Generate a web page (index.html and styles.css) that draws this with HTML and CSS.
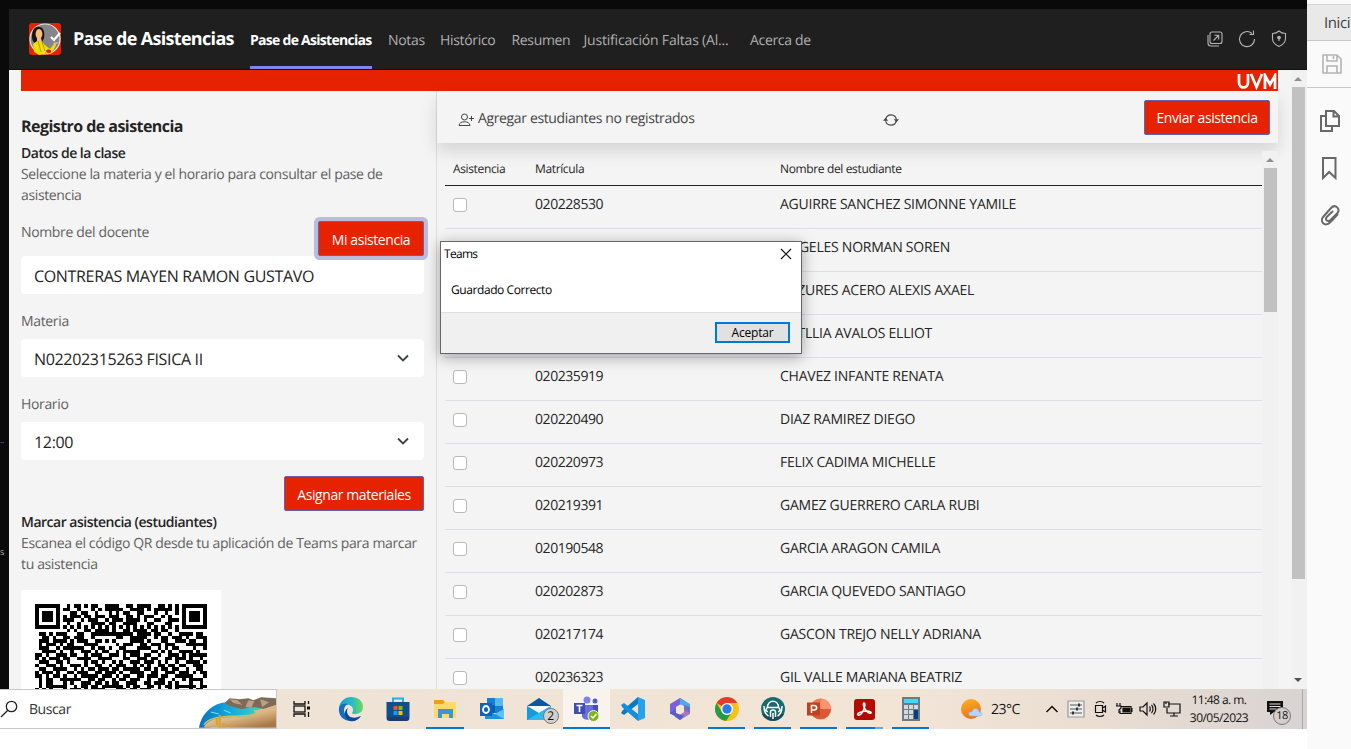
FILE: index.html
```html
<!DOCTYPE html>
<html lang="es">
<head>
<meta charset="utf-8">
<title>Pase de Asistencias</title>
<link rel="stylesheet" href="styles.css">
</head>
<body>
<div class="desktop">
  <div class="screen">
    <div class="edge"><span class="edge-dots">..</span><span class="edge-s">s</span></div>
    <div class="window">
      <header class="topbar">
        <svg class="logo" viewBox="0 0 32 32"><rect width="32" height="32" rx="3" fill="#e62200"/><circle cx="16" cy="16" r="15" fill="#85868a" stroke="#e8e4e0" stroke-width="1.2"/><path d="M3 14C3 7 6 3 10 4c5 0 6 6 5 11l-2 4-7 1c-2-1-3-3-3-6z" fill="#151313"/><ellipse cx="10" cy="11" rx="3.4" ry="5" fill="#f6bd7c"/><path d="M8 15h4l1 4h-5z" fill="#f6bd7c"/><path d="M4 21l4-3 5 1 4 4 4 3 4-5 2 1-4 8-5 1-2-2v2l-6 1-5-3z" fill="#f0df00"/><path d="M9 18l3 11M13 19l3 9" stroke="#b59b00" stroke-width="1"/><path d="M24 20l6-1-4 3z" fill="#f6bd7c"/><path d="M17 28c0-2 5-2 5 0 0 3-4 3-5 0z" fill="#dc2213"/><path d="M22 14l3 3 6-7" fill="none" stroke="#fff" stroke-width="2.2"/></svg>
        <h1 class="app-name">Pase de Asistencias</h1>
        <nav class="tabs">
          <a class="tab tab-active">Pase de Asistencias</a><a class="tab t-notas">Notas</a><a class="tab t-hist">Histórico</a><a class="tab t-res">Resumen</a><a class="tab t-just">Justificación Faltas (Al...</a><a class="tab t-acerca">Acerca de</a>
        </nav>
        <div class="top-actions">
          <svg width="16" height="16" viewBox="0 0 16 16"><rect x="3" y="1" width="12" height="11.5" rx="2"/><path d="M1 4v8a3 3 0 0 0 3 3h8M6.500 9.500l5-5M7.500 4.300h4.200v4.200"/></svg>
          <svg width="18" height="18" viewBox="0 0 18 18"><path d="M16.500 9A7.500 7.500 0 1 1 14 3.500M11.500 4.500h4v-4"/></svg>
          <svg width="16" height="18" viewBox="0 0 16 18"><path d="M8 1c2 1.800 4 2.400 6.500 2.500v5c0 4-3 6.500-6.500 8-3.500-1.500-6.500-4-6.500-8v-5C4 3.400 6 2.800 8 1z"/><circle cx="8" cy="7.500" r="1.300" fill="#b5b5b5"/><path d="M8 8v3"/></svg>
        </div>
      </header>
      <div class="content">
        <main class="page">
          <div class="banner"><svg width="41" height="17" viewBox="0 0 41 17"><path d="M3 1v8.500c0 6.500 9 6.500 9 0V1M15 1l5.500 13L26 1M29 16V2.500l5 9 5-9V16" fill="none" stroke="#fff" stroke-width="2.700"/></svg></div>
          <div class="columns">
            <section class="form">
              <h2 class="title">Registro de asistencia</h2>
              <h3 class="subtitle">Datos de la clase</h3>
              <p class="hint">Seleccione la materia y el horario para consultar el pase de<br>asistencia</p>
              <div class="name-row"><label class="label">Nombre del docente</label><button class="btn btn-focus">Mi asistencia</button></div>
              <div class="field">CONTRERAS MAYEN RAMON GUSTAVO</div>
              <label class="label label-gap">Materia</label>
              <div class="field">N02202315263 FISICA II<svg class="chev" viewBox="0 0 12 8"><path d="M1 1.500l5 5 5-5"/></svg></div>
              <label class="label label-gap">Horario</label>
              <div class="field">12:00<svg class="chev" viewBox="0 0 12 8"><path d="M1 1.500l5 5 5-5"/></svg></div>
              <button class="btn btn-assign">Asignar materiales</button>
              <h3 class="subtitle">Marcar asistencia (estudiantes)</h3>
              <p class="hint">Escanea el código QR desde tu aplicación de Teams para marcar<br>tu asistencia</p>
              <div class="qr"><svg width="172" height="172" viewBox="0 0 49 49" shape-rendering="crispEdges"><path id="qr-path"/></svg></div>
            </section>
            <section class="list">
              <div class="toolbar">
                <svg class="add-icon" viewBox="0 0 17 14"><circle cx="6.500" cy="4" r="3"/><path d="M1 12.500c0-5 11-5 11 0zM11 5.500h5M13.500 3v5"/></svg>
                <span class="add-text">Agregar estudiantes no registrados</span>
                <svg class="sync-icon" viewBox="0 0 16 14"><path d="M2.800 6A5.400 5.400 0 0 1 13.400 6.500M13.200 8A5.400 5.400 0 0 1 2.600 7.500"/><path d="M10.800 6.200H16l-2.600 3zM0 7.800h5.200l-2.600-3z" fill="#444" stroke="none"/></svg>
                <button class="btn btn-send">Enviar asistencia</button>
              </div>
              <div class="table-wrap">
                <div class="table" id="table">
                  <div class="thead"><span>Asistencia</span><span>Matrícula</span><span>Nombre del estudiante</span></div>
                </div>
                <div class="scroll scroll-in"><i class="up"></i><b class="thumb thumb-in"></b></div>
              </div>
            </section>
          </div>
        </main>
        <div class="scroll scroll-out"><i class="up"></i><b class="thumb thumb-out"></b><i class="down"></i></div>
      </div>
    </div>
  </div>
  <footer class="taskbar">
    <div class="search">
      <svg class="lens" width="18" height="18" viewBox="0 0 18 18"><circle cx="11.500" cy="6.500" r="5.200"/><path d="M7.800 10.200L1 17"/></svg><span>Buscar</span>
      <svg class="beach" viewBox="0 0 78 31"><defs><linearGradient id="sea"><stop offset="0" stop-color="#0871bd"/><stop offset=".5" stop-color="#13a9dc"/><stop offset="1" stop-color="#46d1c0"/></linearGradient><linearGradient id="sand" x2=".7" y2="1"><stop stop-color="#e6c594"/><stop offset=".6" stop-color="#dbb685"/><stop offset="1" stop-color="#a87947"/></linearGradient></defs><path d="M0 31C2 17 14 5 29 5h34v15L10 31z" fill="url(#sea)"/><path d="M5 31c3-10 19-11 34-11 13 0 20-2 17-6l22-6v23z" fill="url(#sand)"/><path d="M5 28c6-9 22-8 36-9 14 0 19-2 15-6" fill="none" stroke="#c9bf63" stroke-width="1.500"/><path d="M26 6l5-5 10 1 9-1 5 2 8-3 15 1v7l-13 4-9-2-13 2-12-3z" fill="#7e6a56"/><path d="M31 2l8 1 5 5-9-2zM50 3l6 1-3 7-6-1zM62 2l9 3-7 5z" fill="#b8a184"/><path d="M12 15l8 2M25 13l7 3" stroke="#8de0ee"/><path d="M18 21v7M21 18v13M25 26v5M33 27v4" stroke="#dda21f" stroke-width="2"/></svg>
    </div>
    <div class="apps">
      <div class="app app-view"><svg width="18" height="18" viewBox="0 0 18 18" fill="none" stroke="#111" stroke-width="1.300"><path d="M1 1v3h11V1M1 17v-3h11v3M15.500 1v3M15.500 12v5"/><rect x="1" y="6" width="11" height="6"/><path d="M14 6.500h3v3h-3z" fill="#111" stroke="none"/></svg></div>
      <div class="app wide"><svg width="26" height="26" viewBox="0 0 26 26"><defs><linearGradient id="eg"><stop stop-color="#159bdc"/><stop offset=".55" stop-color="#2bbbc3"/><stop offset="1" stop-color="#6bdc51"/></linearGradient></defs><path d="M1 12C2 5 7 1 13 1c7 0 12 4 12 10 0 5-4 7-8 7-4 0-3-1-2-3 1-5-5-8-10-5z" fill="url(#eg)"/><path d="M1 12c1-4 5-5 9-4-4 2-5 6-3 10 2 4 8 5 16 2-3 4-6 5-10 5C5 25 0 19 1 12z" fill="#146fc2"/><path d="M10 12c-3 5 1 11 9 10l4-2c-3 4-7 6-11 5-6-3-7-10-2-13z" fill="#0c4a98"/></svg></div>
      <div class="app wide"><svg width="26" height="26" viewBox="0 0 26 26"><path d="M8 8V2.500h10V8" fill="none" stroke="#24afe9" stroke-width="2"/><path d="M1.500 6h23v16a3 3 0 0 1-3 3h-17a3 3 0 0 1-3-3z" fill="#114f8c"/><path d="M2 21h22l-2 4H4z" fill="#1a3d6b"/><path d="M8.500 10h4v4h-4z" fill="#f15325"/><path d="M13.500 10h4v4h-4z" fill="#81bd06"/><path d="M8.500 15h4v4h-4z" fill="#06a6ef"/><path d="M13.500 15h4v4h-4z" fill="#ffbb05"/></svg></div>
      <div class="app wide run"><svg width="24" height="22" viewBox="0 0 24 22"><path d="M1 2h9l2 2h11v16H1z" fill="#e7a512"/><path d="M1 6h9l2-2h11v16H1z" fill="#ffd969"/><path d="M5 20v-9h15v9h-4v-4H9v4z" fill="#3c95d4"/></svg></div>
      <div class="app wide"><svg width="26" height="24" viewBox="0 0 26 24"><path d="M8 1h16v15H8z" fill="#157fd3"/><path d="M16 1h8v8h-8z" fill="#50baf2"/><path d="M8 8h8v8H8z" fill="#0961b1"/><path d="M6 12l10 5 9-5v10H6z" fill="#1e91df"/><path d="M16 17l9-5v10z" fill="#5ac4f4"/><path d="M1 6h12v13H1z" fill="#0a64ba"/><ellipse cx="7" cy="12.500" rx="3" ry="3.500" fill="none" stroke="#fff" stroke-width="1.800"/></svg></div>
      <div class="app wide"><svg width="26" height="24" viewBox="0 0 26 24"><path d="M1 9L13 1l12 8z" fill="#0757a5"/><path d="M3 9h20l-10 8z" fill="#f6f7f8"/><path d="M1 9l12 7 12-7v14H1z" fill="#129bdf"/><path d="M1 23L25 9v14z" fill="#35b7ee"/></svg><span class="badge">2</span></div>
      <div class="app wide active"><svg width="26" height="26" viewBox="0 0 26 26"><circle cx="14" cy="4" r="3.500" fill="#7b83eb"/><circle cx="22" cy="5" r="2.500" fill="#505ac9"/><path d="M9 9h11v9a6 6 0 0 1-11 3z" fill="#6870d7"/><path d="M20 9h5v8c0 2-2 4-5 3z" fill="#454dbb"/><path d="M1 7h11v11H1z" fill="#454cb1"/><path d="M3.500 9.500h6M6.500 9.500V16" stroke="#fff" stroke-width="1.600"/><circle cx="20.500" cy="20" r="5.500" fill="#7eb51b" stroke="#f7f3ec"/><path d="M18 20l2 2 3.500-4" fill="none" stroke="#fff" stroke-width="1.500"/></svg></div>
      <div class="app wide"><svg width="26" height="26" viewBox="0 0 26 26"><path d="M18 1l7 3v18l-7 3z" fill="#27a2eb"/><path d="M18 1v7L4 19l-3-2 2-3z" fill="#087bc5"/><path d="M18 25v-7L4 7 1 9l2 3z" fill="#148ddb"/></svg></div>
      <div class="app wide"><svg width="24" height="26" viewBox="0 0 24 26"><path d="M2 8L12 2l5 3-5 4-4 3v7l-6-1z" fill="#7961d8"/><path d="M12 2l10 6v9l-6-3V10l-4-2z" fill="#4baceb"/><path d="M22 14v4l-10 6-5-3 9-5V9l6 2z" fill="#8a55ba" opacity=".75"/><path d="M2 17l6-4v4l8 3-4 4z" fill="#545dca"/><path d="M12 8.500l4 2.500v5l-4 2.500L8 16v-5z" fill="#f2e7da"/></svg></div>
      <div class="app run"><svg width="26" height="26" viewBox="0 0 26 26"><circle cx="13" cy="13" r="12" fill="#fbc116"/><path d="M13 13L2.600 7A12 12 0 0 1 23.400 7H13z" fill="#e33b2e"/><path d="M2.600 7A12 12 0 0 0 12 25l6-9-5 3-5-3z" fill="#299b48"/><circle cx="13" cy="13" r="6" fill="#fff"/><circle cx="13" cy="13" r="4.700" fill="#2b7be9"/></svg></div>
      <div class="app run"><svg width="26" height="26" viewBox="0 0 26 26"><circle cx="13" cy="13" r="12" fill="#166b72"/><path d="M2 18h22c-4 9-18 9-22 0z" fill="#174c58"/><path d="M7.500 11.500C7.500 3 18.500 3 18.500 11.500M4 10c0 5 1 8 4.500 10M22 10c0 5-1 8-4.500 10M8 15.500c-3 0-2-4 0-4h10c2 0 3 4 0 4M10.500 21v-5c0-1 1-2 2.500-2s2.500 1 2.500 2v5M13 17v6" fill="none" stroke="#fff" stroke-width="1.500"/></svg></div>
      <div class="app run"><svg width="26" height="24" viewBox="0 0 26 24"><circle cx="14.500" cy="12" r="10.500" fill="#ee7955"/><path d="M14.500 1.500A10.500 10.500 0 0 1 25 12H14.500z" fill="#ff9270"/><path d="M25 12a10.500 10.500 0 0 1-20 4l9-4z" fill="#d85933"/><path d="M1 5.500h13v13H1z" fill="#c3401f"/><path d="M5.500 16V8.500H8c3.500 0 3.500 4.500 0 4.500H5.500" fill="none" stroke="#fff" stroke-width="1.600"/></svg></div>
      <div class="app run run-multi"><svg width="23" height="23" viewBox="0 0 23 23"><rect x="1" y="1" width="21" height="21" rx="3" fill="#b30b00"/><path d="M5 17c-2-2 5-4 10-4 5 1 3 3 1 2C12 13 9 6 11 5c3 0-2 14-6 12z" fill="none" stroke="#fff" stroke-width="1.500"/></svg></div>
      <div class="app run"><svg width="20" height="26" viewBox="0 0 20 26"><path d="M1 1h18v24H1z" fill="#6f7a83"/><path d="M3 3h14v4H3z" fill="#45d7fa"/><path d="M3 9h4v4H3zM8 9h4v4H8zM13 9h4v4h-4zM3 14h4v4H3zM8 14h4v4H8zM3 19h4v4H3zM8 19h4v4H8z" fill="#d2d9df"/><path d="M13 14h4v9h-4z" fill="#063f84"/></svg></div>
    </div>
    <div class="weather"><svg width="24" height="22" viewBox="0 0 24 22"><defs><linearGradient id="sun" x2=".3" y2="1"><stop stop-color="#f9b522"/><stop offset="1" stop-color="#ee721a"/></linearGradient></defs><circle cx="11" cy="11" r="10" fill="url(#sun)"/><path d="M11 18c-4-1-2-5 1-4 1-5 7-4 7 0 4 0 4 4 1 4z" fill="#b9d4fb" stroke="#8bb3ed" stroke-width=".6"/></svg><span>23°C</span></div>
    <div class="tray">
      <svg viewBox="0 0 18 18"><path d="M3.500 12L9 6.500l5.500 5.500" stroke-width="1.500"/></svg>
      <svg viewBox="0 0 18 18"><path d="M1 1h16v16H1z" fill="#eee" stroke="#999"/><path d="M3 5h12M3 9h12M3 13h12" stroke="#555"/><path d="M11 3.500h2v3h-2zM5 11.500h2v3H5zM9 7.500h2v3H9z" fill="#333" stroke="none"/></svg>
      <svg viewBox="0 0 18 18"><path d="M5 3c2-2 6-2 8 0M5 15c2 2 6 2 8 0M4.500 5.500h7v7h-7zM11.500 8l3-2v6l-3-2"/></svg>
      <svg viewBox="0 0 18 18"><path d="M6 6.500h10v7H5v-3"/><path d="M8 8h6.500v4H8z" fill="#111"/><path d="M2 3v3M5 3v3M1 6h5v2l-2 2v3"/><path d="M16 8h1.500v4H16z" fill="#111" stroke="none"/></svg>
      <svg viewBox="0 0 18 18"><path d="M1 7h3l4-4v12l-4-4H1zM10.500 6.500c1 1 1 4 0 5M12.500 5c2 2 2 6 0 8M14.500 3.500c3 3 3 8 0 11"/></svg>
      <svg viewBox="0 0 18 18"><path d="M5 4h12v9H4V8M11 13v3M7 16h8M1 2h5v5H1zM3 2v2"/></svg>
    </div>
    <div class="clock"><span>11:48 a. m.</span><span>30/05/2023</span></div>
    <div class="notif"><svg width="18" height="16" viewBox="0 0 18 16"><path d="M1 1h16v11H8l-4 3v-3H1z" fill="#111"/><path d="M3.500 4h11M3.500 6.500h11M3.500 9h7" stroke="#ddd" stroke-width="1"/></svg><span class="badge badge-n">18</span></div>
  </footer>
</div>
<aside class="reader">
  <div class="reader-tab">Inici</div>
  <div class="reader-save"><svg width="22" height="22" viewBox="0 0 22 22" stroke="#b4b4b4"><path d="M2 2h14l4 4v14H2zM6 2v6h10V2M6 20v-7h10v7M12.500 3v3"/></svg></div>
  <svg class="r-icon" width="22" height="24" viewBox="0 0 22 24"><path d="M7 2h8l5 5v10H7zM14.500 2v5.500H20M7 7H2v15h11v-5"/></svg>
  <svg class="r-icon" width="22" height="24" viewBox="0 0 22 24"><path d="M4 2h12.500v20L10.200 16 4 22z"/></svg>
  <svg class="r-icon" width="22" height="24" viewBox="0 0 22 24"><path d="M19 11l-8 8.500c-5 5-11-1-6.500-6L12 5c4.500-4.500 10 1 6 5.500L11.500 17c-3 2.500-6-.5-3.500-3.200L14 8"/></svg>
</aside>
<div class="dialog">
  <div class="dialog-head"><span>Teams</span><svg width="12" height="12" viewBox="0 0 12 12"><path d="M1 1l10 10M11 1L1 11"/></svg></div>
  <div class="dialog-body">Guardado Correcto</div>
  <div class="dialog-foot"><button class="ok">Aceptar</button></div>
</div>
<script src="app.js"></script>
</body>
</html>
```
FILE: styles.css
```css
* { box-sizing: border-box; }
body { margin: 0; width: 1351px; height: 749px; overflow: hidden; display: flex; background: #fff; font-family: "Open Sans", "Noto Sans", sans-serif; font-size: 14px; color: #252424; text-rendering: geometricPrecision; letter-spacing: -0.42px; }
h1, h2, h3, p { margin: 0; }
button { font: inherit; letter-spacing: inherit; padding: 0; }
span, a, button, .field, label, h1, h2, h3, p { white-space: nowrap; }
svg { display: block; flex: none; }

.desktop { width: 1307px; height: 749px; display: flex; flex-direction: column; }
.screen { height: 689px; background: #0a0a0a; padding-top: 9px; display: flex; overflow: hidden; }
.edge { width: 9px; color: #aaa; font-size: 9px; display: flex; flex-direction: column; padding-top: 424px; line-height: 14px; overflow: hidden; }
.edge-dots { color: #6666cc; }
.edge-s { margin-top: 98px; }
.window { width: 1298px; height: 680px; background: #f4f4f4; display: flex; flex-direction: column; }

.topbar { height: 61px; flex: none; background: #1f1f1f; border-bottom: 1px solid #111; display: flex; align-items: center; padding-left: 20px; color: #b0b0b0; }
.logo { width: 32px; height: 32px; }
.app-name { width: 162px; margin: 0 15px 0 12px; color: #fff; font-size: 18px; font-weight: 700; letter-spacing: -0.68px; }
.tabs { display: flex; height: 60px; gap: 16px; width: 957px; }
.tab { height: 60px; line-height: 64px; letter-spacing: -0.33px; }
.tab-active { width: 122px; color: #fff; font-weight: 700; border-bottom: 3px solid #7f85f5; letter-spacing: -0.72px; }
.t-notas { width: 36px; }
.t-hist { width: 55.500px; }
.t-res { width: 56px; }
.t-just { width: 150.500px; letter-spacing: -0.2px; }
.top-actions { display: flex; align-items: center; gap: 15px; }
.top-actions svg { fill: none; stroke: #b5b5b5; stroke-width: 1.1; }

.content { display: flex; height: 619px; }
.page { width: 1269px; padding-left: 12px; }
.banner { height: 21px; background: #e62200; display: flex; justify-content: flex-end; padding: 3px 1px 0 0; }
.columns { display: flex; }
.form { width: 416px; height: 598px; padding: 24px 12px 0 0; border-right: 1px solid #dcdcdc; display: flex; flex-direction: column; }
.title { font-size: 16px; line-height: 22px; font-weight: 700; letter-spacing: -0.55px; }
.subtitle { font-size: 14px; line-height: 21px; font-weight: 600; margin-top: 6px; letter-spacing: -0.5px; }
.hint { line-height: 21px; color: #616161; letter-spacing: -0.36px; }
.name-row { display: flex; justify-content: space-between; margin-top: 15px; height: 35px; }
.label { line-height: 22px; padding-top: 1px; color: #616161; letter-spacing: -0.35px; }
.label-gap { margin: 16px 0 6px; }
.field { height: 38px; flex: none; border-radius: 4px; background: #fff; padding: 1px 15px 0 13px; display: flex; align-items: center; justify-content: space-between; font-size: 16px; letter-spacing: -0.33px; }
.chev { width: 12px; height: 8px; margin-top: -1px; fill: none; stroke: #3c4248; stroke-width: 1.8; }
.btn { height: 35px; background: #e62200; color: #fff; border: 1px solid #6264a7; border-radius: 2px; flex: none; padding-top: 1px; }
.btn-focus { width: 106px; box-shadow: 0 0 0 4px #bbbbdd; position: relative; }
.btn-assign { width: 140px; align-self: flex-end; margin-top: 16px; margin-bottom: -5px; }
.qr { width: 200px; height: 200px; background: #fff; margin-top: 15px; padding: 14px; }

.list { width: 841px; }
.toolbar { height: 52px; box-shadow: 0 8px 16px rgba(0, 0, 0, .13); display: flex; align-items: center; padding-left: 21px; color: #444; }
.add-icon { width: 17px; height: 14px; margin-top: 5px; fill: none; stroke: #444; }
.add-text { width: 405px; margin-left: 3px; padding-top: 2px; letter-spacing: -0.36px; }
.sync-icon { width: 16px; height: 14px; margin-top: 5px; fill: none; stroke: #444; stroke-width: 1.1; }
.btn-send { width: 126px; margin-left: 245px; }
.table-wrap { display: flex; padding-left: 8px; height: 546px; }
.table { width: 817px; overflow: hidden; }
.thead, .row { display: grid; grid-template-columns: 82px 245px 1fr; padding-left: 8px; align-items: center; }
.thead { height: 43px; padding-top: 8px; font-size: 12px; border-bottom: 1px solid #252424; letter-spacing: -0.36px; }
.row { height: 43px; border-bottom: 1px solid #dddfe5; padding-bottom: 5px; letter-spacing: -0.24px; }
.box { width: 14px; height: 14px; border: 1px solid #b9b9b9; border-radius: 3px; background: #fff; }
.matricula { letter-spacing: -0.44px; }

.scroll { width: 16px; display: flex; flex-direction: column; align-items: center; background: #f1f1f1; }
.scroll-in { margin-top: 8px; padding-top: 7px; }
.scroll-out { margin-left: 13px; padding: 7px 2px 0 0; }
.up, .down { border: 4px solid transparent; width: 8px; height: 4px; }
.up { border-top: 0; border-bottom-color: #8f8f8f; }
.down { border-bottom: 0; border-top-color: #505050; margin-top: 99px; }
.thumb { width: 13px; background: #c1c1c1; margin-top: 6px; }
.thumb-in { height: 144px; }
.thumb-out { height: 492px; }

.taskbar { height: 40px; display: flex; background: linear-gradient(90deg, #efe3d5 22%, #f2e5d6 70%, #e9ddd2 85%, #d8d3d2); color: #111; }
.search { width: 277px; border: 1px solid #c8c8c8; border-left: 0; background: #fff; display: flex; align-items: center; color: #333; }
.lens { fill: none; stroke: #222; stroke-width: 1.3; }
.search span { margin-left: 11px; width: 171px; padding-top: 1px; }
.beach { width: 77px; height: 31px; margin-top: 7px; }
.apps { display: flex; margin-left: 1.500px; width: 674.500px; }
.app { width: 46px; flex: none; display: flex; align-items: center; justify-content: center; position: relative; }
.wide { width: 47px; }
.app-view { width: 49px; padding-right: 3px; }
.run::after { content: ""; position: absolute; left: 4px; right: 5px; bottom: 0; height: 2px; background: #0078d7; }
.run-multi::after { background: linear-gradient(90deg, #0078d7 78%, #68a8dc 78%); }
.active { background: #f8f3ed; border-bottom: 2px solid #0078d7; padding-top: 2px; }
.badge { position: absolute; left: 27px; top: 19px; width: 16px; height: 16px; border: 1px solid #777; border-radius: 50%; background: #d3d0cc; font-size: 12px; line-height: 14px; text-align: center; }
.weather { display: flex; align-items: center; width: 86px; margin-left: 7px; }
.weather span { margin-left: 7px; letter-spacing: -0.5px; }
.tray { display: flex; align-items: center; gap: 6px; margin-left: -3px; }
.tray svg { width: 18px; height: 18px; fill: none; stroke: #111; stroke-width: 1.2; }
.clock { width: 64px; margin-left: 6px; font-size: 12px; line-height: 18px; display: flex; flex-direction: column; align-items: center; padding-top: 2px; letter-spacing: -0.54px; }
.notif { position: relative; width: 52px; border-right: 1px solid #aaa; padding: 11px 0 0 15px; }
.badge-n { left: 22px; top: 18px; width: 18px; height: 18px; line-height: 16px; font-size: 11px; }

.reader { width: 44px; height: 749px; background: #fafafa; padding-top: 4px; color: #3c4043; overflow: hidden; }
.reader-tab { height: 37px; border-top: 1px solid #d5d5d5; border-bottom: 1px solid #c8c8c8; background: #e9e9e9; padding-left: 17px; line-height: 36px; font-size: 15px; }
.reader-save { height: 47px; border-bottom: 1px solid #c8c8c8; padding: 12px 0 0 14px; }
.reader svg { fill: none; stroke-width: 1.6; }
.r-icon { stroke: #686868; margin: 21px 0 0 12px; }
.reader .r-icon { stroke-width: 2; }
.r-icon + .r-icon { margin-top: 23px; }

.dialog { position: absolute; left: 440px; top: 241px; width: 362px; height: 113px; border: 1px solid #666; background: #fff; box-shadow: 0 3px 14px rgba(0, 0, 0, .35); font-size: 12px; color: #000; display: flex; flex-direction: column; }
.dialog-head { height: 25px; display: flex; align-items: center; justify-content: space-between; padding: 0 9px 2px 3px; letter-spacing: -0.7px; }
.dialog-head svg { stroke: #111; stroke-width: 1.1; }
.dialog-body { height: 45px; padding-left: 10px; line-height: 46px; }
.dialog-foot { flex: 1; background: #f0f0f0; border-top: 1px solid #dfdfdf; display: flex; justify-content: flex-end; padding: 9px 11px 0 0; }
.ok { width: 75px; height: 21px; border: 2px solid #0078d7; background: #e1e1e1; color: #000; line-height: 17px; letter-spacing: -0.2px; }
```
FILE: app.js
```js
const students = [
  ["020228530", "AGUIRRE SANCHEZ SIMONNE YAMILE"],
  ["", "ANGELES NORMAN SOREN"],
  ["", "CAZURES ACERO ALEXIS AXAEL"],
  ["", "BATLLIA AVALOS ELLIOT"],
  ["020235919", "CHAVEZ INFANTE RENATA"],
  ["020220490", "DIAZ RAMIREZ DIEGO"],
  ["020220973", "FELIX CADIMA MICHELLE"],
  ["020219391", "GAMEZ GUERRERO CARLA RUBI"],
  ["020190548", "GARCIA ARAGON CAMILA"],
  ["020202873", "GARCIA QUEVEDO SANTIAGO"],
  ["020217174", "GASCON TREJO NELLY ADRIANA"],
  ["020236323", "GIL VALLE MARIANA BEATRIZ"]
];
const table = document.getElementById("table");
for (const [id, name] of students) {
  const row = document.createElement("div");
  row.className = "row";
  row.innerHTML = `<span class="box"></span><span class="matricula">${id}</span><span>${name}</span>`;
  table.append(row);
}

// QR modules, one string per row
const modules = [
  "1111111001011010110011110011011110011010101111111",
  "1000001011001000101011111001111010111110101000001",
  "1011101000110110010001010110011000100100101011101",
  "1011101010111011011101110011010111001010001011101",
  "1011101011100101110010111011110100110011101011101",
  "1000001001001000111101100111100011000110001000001",
  "1111111010101010101010101010101010101010101111111",
  "0000000001010011011110100110111101101100100000000",
  "0110101110001100111111111111011110110010011110110",
  "0011010011011100100000011001111100101101110100111",
  "0111011110101110011010100001111010001100111011001",
  "0101110101100011110000010111001101110111000111111",
  "0111001011111100101101001100011110010101100001001",
  "0011110100100111010110010111110001101010011110100",
  "1101001110110010111001110101110110010011101011111",
  "1010111011001111001111000110011101100110111010010",
  "0111001101000010110100101001110111010100100111101",
  "1001110100111010011001011100101010011011011001110",
  "0110011110010101101110110111110110101101100100110",
  "1011101001101110011011101001111001100111011101011",
  "1101011010010111110111010110011011101100111110001",
  "0101100111111001101100101101110010011001001011110",
  "0101100010100111011010110011100110111010100010010",
  "0101111110010110110111111010110011010110111111011",
  "1010100010111010111100011101101110010010100010110"
];
let d = "";
modules.forEach((line, y) => [...line].forEach((v, x) => { if (v === "1") d += `M${x} ${y}h1v1h-1z`; }));
document.getElementById("qr-path").setAttribute("d", d);
```
